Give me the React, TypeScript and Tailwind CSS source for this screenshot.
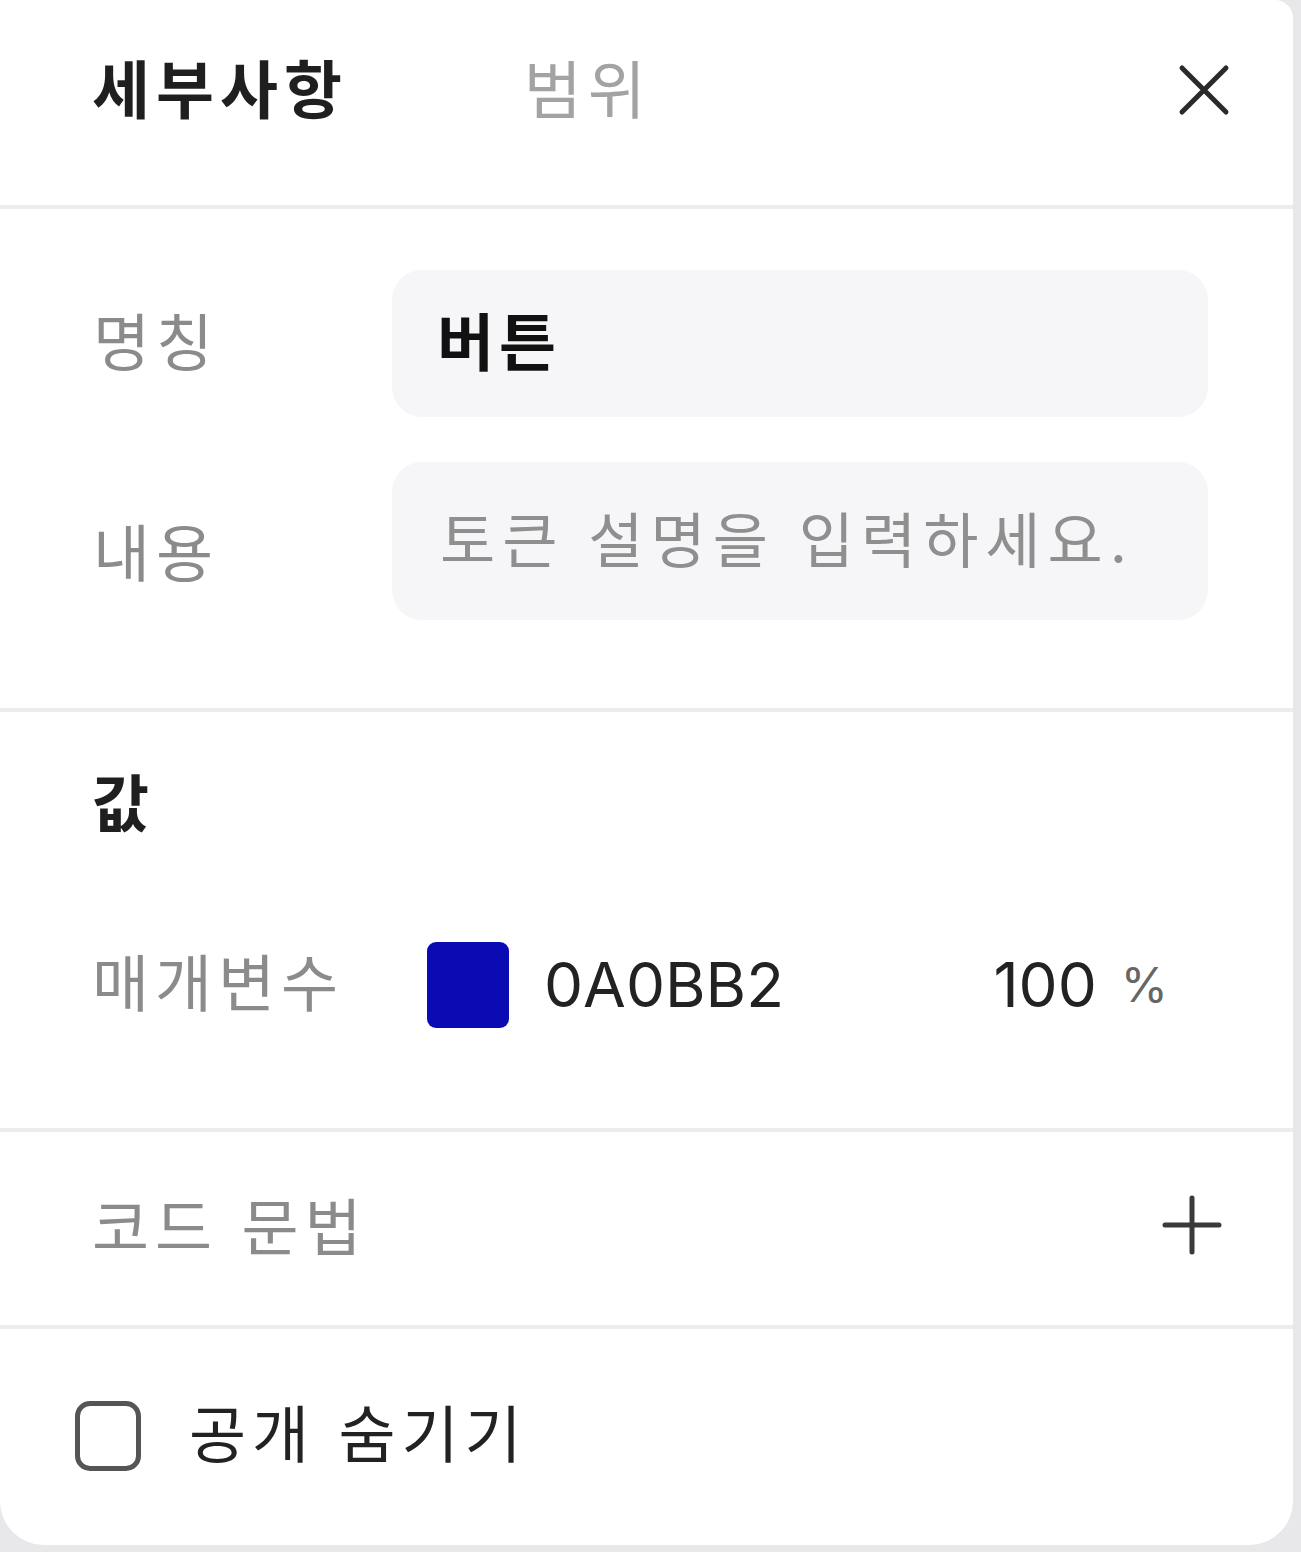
import { useState } from 'react'

const font = 'font-[Inter,"Noto_Sans_CJK_KR",sans-serif]'
const label = 'text-[62px] leading-none text-[#8b8b8b] tracking-[6px]'

function Divider() {
  return <div className="h-[4px] bg-[#ececee]" />
}

export default function App() {
  const [hidden, setHidden] = useState(false)

  return (
    <div className={`w-[1301px] h-[1552px] bg-[#e8e8ea] ${font}`}>
      <div className="w-[1293px] h-[1545px] bg-white rounded-tr-[18px] rounded-b-[44px] overflow-hidden flex flex-col">
        {/* Header */}
        <div className="h-[205px] flex items-center pb-[25px] pl-[92px] pr-[63px]">
          <span className="text-[63px] leading-none font-bold text-[#1f1f1f] tracking-[6px]">세부사항</span>
          <span className="ml-[176px] text-[63px] leading-none text-[#a3a3a3] tracking-[6px]">범위</span>
          <button className="ml-auto w-[52px] h-[52px] flex items-center justify-center">
            <svg width="52" height="52" viewBox="0 0 52 52" fill="none" stroke="#2a2a2a" strokeWidth="5" strokeLinecap="round">
              <path d="M4 4 L48 48 M48 4 L4 48" />
            </svg>
          </button>
        </div>
        <Divider />

        {/* Name / description */}
        <div className="h-[499px] pt-[61px] pl-[93px] pr-[85px] flex flex-col gap-[45px]">
          <div className="flex items-center">
            <span className={`${label} w-[299px]`}>명칭</span>
            <div className="flex-1 h-[147px] rounded-[30px] bg-[#f6f6f8] flex items-center pl-[45px]">
              <span className="text-[62px] leading-none font-bold text-[#111] tracking-[5px]">버튼</span>
            </div>
          </div>
          <div className="flex items-center">
            <span className={`${label} w-[299px] pt-[28px]`}>내용</span>
            <div className="flex-1 h-[158px] rounded-[30px] bg-[#f6f6f8] flex items-center pl-[48px]">
              <span className="text-[60px] leading-none text-[#8f8f8f] tracking-[7px]">토큰 설명을 입력하세요.</span>
            </div>
          </div>
        </div>
        <Divider />

        {/* Value */}
        <div className="h-[416px] pl-[92px] pr-[125px] flex flex-col">
          <div className="h-[186px] flex items-center">
            <span className="text-[62px] leading-none font-bold text-[#1f1f1f]">값</span>
          </div>
          <div className="h-[174px] flex items-center">
            <span className={`${label} w-[335px]`}>매개변수</span>
            <div className="w-[82px] h-[86px] rounded-[9px] bg-[#0a0bb2]" />
            <span className="ml-[35px] text-[62px] leading-none text-[#222]">0A0BB2</span>
            <span className="ml-auto text-[62px] leading-none text-[#222]">100</span>
            <span className="ml-[24px] text-[48px] leading-none text-[#666]">%</span>
          </div>
        </div>
        <Divider />

        {/* Code syntax */}
        <div className="h-[193px] pl-[92px] pr-[71px] flex items-center">
          <span className={label}>코드 문법</span>
          <button className="ml-auto w-[60px] h-[60px] flex items-center justify-center -mt-[8px]">
            <svg width="60" height="60" viewBox="0 0 60 60" fill="none" stroke="#3a3a3a" strokeWidth="5" strokeLinecap="round">
              <path d="M30 3 V57 M3 30 H57" />
            </svg>
          </button>
        </div>
        <Divider />

        {/* Hide publicly */}
        <div className="flex-1 pl-[75px] flex items-start pt-[72px]">
          <label className="flex items-center gap-[48px] cursor-pointer">
            <input
              type="checkbox"
              checked={hidden}
              onChange={e => setHidden(e.target.checked)}
              className="appearance-none w-[66px] h-[70px] rounded-[15px] border-[5px] border-[#555] bg-white checked:bg-[#0a0bb2] checked:border-[#0a0bb2]"
            />
            <span className="text-[62px] leading-none text-[#222] tracking-[6px]">공개 숨기기</span>
          </label>
        </div>
      </div>
    </div>
  )
}
